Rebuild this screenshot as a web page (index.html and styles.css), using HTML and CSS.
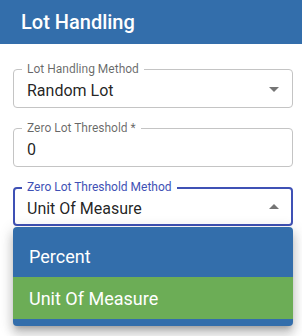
FILE: index.html
```html
<!DOCTYPE html>
<html lang="en">
<head>
    <meta charset="UTF-8">
    <meta name="viewport" content="width=device-width, initial-scale=1.0">
    <title>Lot Handling</title>
    <link rel="stylesheet" href="styles.css">
</head>
<body>

    <!-- Header -->
    <div class="panel-header">
        <h2>Lot Handling</h2>
    </div>

    <!-- Fields -->
    <div class="panel-body">
        <div class="field">
            <label class="field-label">Lot Handling Method</label>
            <div class="field-input">
                <span class="field-value">Random Lot</span>
                <svg class="field-arrow" viewBox="0 0 24 24"><path d="M7 10l5 5 5-5z"></path></svg>
            </div>
        </div>

        <div class="field">
            <label class="field-label">Zero Lot Threshold *</label>
            <div class="field-input">
                <span class="field-value">0</span>
            </div>
        </div>

        <div class="field focused">
            <label class="field-label">Zero Lot Threshold Method</label>
            <div class="field-input">
                <span class="field-value">Unit Of Measure</span>
                <svg class="field-arrow" viewBox="0 0 24 24"><path d="M7 14l5-5 5 5z"></path></svg>
            </div>

            <!-- Open dropdown -->
            <ul class="dropdown-menu">
                <li>Percent</li>
                <li class="selected">Unit Of Measure</li>
            </ul>
        </div>
    </div>

</body>
</html>
```

FILE: styles.css
```css
body, html {
    margin: 0;
    padding: 0;
    height: 100%;
    background: #fff;
    font-family: Roboto, 'Noto Sans', sans-serif;
}

/* Header */
.panel-header {
    height: 44px;
    background-color: #336eab;
    display: flex;
    align-items: center;
    padding-left: 21px;
}

.panel-header h2 {
    margin: 0;
    color: #fff;
    font-size: 20px;
    font-weight: 500;
}

/* Fields */
.panel-body {
    display: flex;
    flex-direction: column;
    gap: 20px;
    padding: 25px 9px 0 13px;
}

.field {
    position: relative;
}

.field-input {
    height: 39px;
    box-sizing: border-box;
    border: 1px solid #c4c4c4;
    border-radius: 4px;
    display: flex;
    align-items: center;
    padding: 0 13px;
}

.field-value {
    font-size: 16px;
    color: rgba(0, 0, 0, 0.87);
    padding-top: 3px;
}

.field-label {
    position: absolute;
    top: -7px;
    left: 9px;
    padding: 0 5px;
    background: #fff;
    font-size: 12px;
    line-height: 14px;
    color: rgba(0, 0, 0, 0.6);
}

.field-arrow {
    position: absolute;
    right: 7px;
    top: 8px;
    width: 24px;
    height: 24px;
    fill: rgba(0, 0, 0, 0.54);
}

.focused .field-input {
    border: 2px solid #3f51b5;
    padding: 0 12px;
}

.focused .field-label {
    color: #3f51b5;
}

/* Dropdown */
.dropdown-menu {
    position: absolute;
    top: 40px;
    left: 0;
    right: 0;
    margin: 0;
    padding: 8px 0 7px;
    list-style: none;
    background-color: #336eab;
    border-radius: 4px;
    box-shadow: 0 5px 5px -3px rgba(0, 0, 0, 0.2), 0 8px 10px 1px rgba(0, 0, 0, 0.14), 0 3px 14px 2px rgba(0, 0, 0, 0.12);
}

.dropdown-menu li {
    height: 42px;
    display: flex;
    align-items: center;
    padding-left: 16px;
    font-size: 18px;
    color: #fff;
}

.dropdown-menu li.selected {
    background-color: #6cad56;
}
```
